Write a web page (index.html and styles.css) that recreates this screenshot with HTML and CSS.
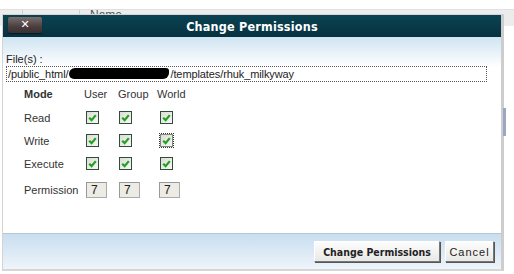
FILE: index.html
```html
<!DOCTYPE html>
<html lang="en">
<head>
    <meta charset="UTF-8">
    <title>Change Permissions</title>
    <link rel="stylesheet" href="styles.css">
</head>
<body>
    <div class="page">
        <div class="grid-head">
            <span class="col-check"></span>
            <span class="col-name">Name</span>
        </div>
    </div>

    <div class="dialog" role="dialog" aria-label="Change Permissions">
        <header class="dlg-header">
            <button class="dlg-close" aria-label="Close">&#x2715;</button>
            <h1 class="dlg-title">Change Permissions</h1>
        </header>
        <section class="dlg-body">
            <div class="files-label">File(s) :</div>
            <div class="files-path">/public_html/<span class="redact"></span>/templates/rhuk_milkyway</div>

            <table class="perm-table">
                <colgroup>
                    <col class="c-mode">
                    <col class="c-user">
                    <col class="c-group">
                    <col class="c-world">
                </colgroup>
                <thead>
                    <tr>
                        <th class="mode">Mode</th>
                        <th>User</th>
                        <th>Group</th>
                        <th>World</th>
                    </tr>
                </thead>
                <tbody>
                    <tr>
                        <td class="label">Read</td>
                        <td><span class="check"><svg viewBox="0 0 10 10"><path d="M2 5.2 4.2 7.4 8 2.8" /></svg></span></td>
                        <td><span class="check c2"><svg viewBox="0 0 10 10"><path d="M2 5.2 4.2 7.4 8 2.8" /></svg></span></td>
                        <td><span class="check c3"><svg viewBox="0 0 10 10"><path d="M2 5.2 4.2 7.4 8 2.8" /></svg></span></td>
                    </tr>
                    <tr>
                        <td class="label">Write</td>
                        <td><span class="check"><svg viewBox="0 0 10 10"><path d="M2 5.2 4.2 7.4 8 2.8" /></svg></span></td>
                        <td><span class="check c2"><svg viewBox="0 0 10 10"><path d="M2 5.2 4.2 7.4 8 2.8" /></svg></span></td>
                        <td><span class="check c3 focused"><svg viewBox="0 0 10 10"><path d="M2 5.2 4.2 7.4 8 2.8" /></svg></span></td>
                    </tr>
                    <tr>
                        <td class="label">Execute</td>
                        <td><span class="check"><svg viewBox="0 0 10 10"><path d="M2 5.2 4.2 7.4 8 2.8" /></svg></span></td>
                        <td><span class="check c2"><svg viewBox="0 0 10 10"><path d="M2 5.2 4.2 7.4 8 2.8" /></svg></span></td>
                        <td><span class="check c3"><svg viewBox="0 0 10 10"><path d="M2 5.2 4.2 7.4 8 2.8" /></svg></span></td>
                    </tr>
                    <tr class="perm-row">
                        <td class="label">Permission</td>
                        <td><span class="perm-box">7</span></td>
                        <td><span class="perm-box c2">7</span></td>
                        <td><span class="perm-box">7</span></td>
                    </tr>
                </tbody>
            </table>
        </section>
        <footer class="dlg-footer">
            <button class="btn btn-primary">Change Permissions</button>
            <button class="btn btn-cancel">Cancel</button>
        </footer>
    </div>
    <div class="scroll-thumb"></div>
</body>
</html>
```

FILE: styles.css
```css
body {
    margin: 0;
    background: #fff;
    font-family: "Liberation Sans", Arial, sans-serif;
    font-size: 11px;
    color: #222;
    width: 514px;
    height: 274px;
    overflow: hidden;
    position: relative;
}
.page {
    padding-top: 9px;
}
.grid-head {
    display: flex;
    height: 16px;
    background: #ececec;
    border-top: 1px solid #e0e0e0;
    color: #555;
    font-size: 12px;
}
.col-check {
    width: 22px;
    border-right: 1px solid #cfcfcf;
}
.col-name {
    margin-left: 56px;
    padding-left: 10px;
    border-left: 1px solid #cfcfcf;
    line-height: 10px;
}
.dialog {
    position: absolute;
    left: 2px;
    top: 14px;
    width: 498px;
    height: 254px;
    background: #fff;
    border: 1px solid #d4d4d4;
    border-right: 3px solid #cdcdcd;
    border-bottom: 2px solid #d6d6d6;
    display: flex;
    flex-direction: column;
}
.dlg-header {
    height: 22px;
    background: linear-gradient(#0a4352, #07313f);
    display: flex;
    align-items: center;
    position: relative;
}
.dlg-close {
    position: absolute;
    left: 5px;
    top: 2px;
    width: 34px;
    height: 16px;
    padding: 0;
    border: none;
    border-radius: 2px;
    background: linear-gradient(#7a6f6f, #4a3e3e 60%, #3a3030);
    box-shadow: 0 1px 1px rgba(0,0,0,0.5);
    color: #fff;
    font-size: 11px;
    font-weight: bold;
    font-family: "DejaVu Sans", sans-serif;
    line-height: 16px;
}
.dlg-title {
    flex-grow: 1;
    margin: 0;
    text-align: center;
    color: #fff;
    font-family: "DejaVu Sans Condensed", "DejaVu Sans", sans-serif;
    font-size: 12.5px;
    font-weight: bold;
    letter-spacing: 0.2px;
}
.dlg-body {
    flex-grow: 1;
    padding: 16px 12px 0 3px;
    background: linear-gradient(#cfe4f2, #ffffff 30px);
}
.files-label {
    color: #222;
    line-height: 12px;
}
.files-path {
    margin-top: 1px;
    width: 478px;
    height: 14px;
    border: 1px dotted #555;
    line-height: 14px;
    padding-left: 1px;
    letter-spacing: -0.1px;
}
.redact {
    display: inline-block;
    width: 100px;
    height: 11px;
    margin: 0 1px;
    background: #000;
    border-radius: 6px 3px 6px 5px;
    vertical-align: -1px;
}
.perm-table {
    margin-top: 0;
    margin-left: 18px;
    border-collapse: collapse;
    table-layout: fixed;
    color: #333;
}
.c-mode { width: 60px; }
.c-user { width: 34px; }
.c-group { width: 39px; }
.c-world { width: 40px; }
.perm-table th {
    font-weight: normal;
    text-align: left;
    height: 24px;
    padding: 0;
    color: #333;
}
.perm-table th.mode {
    font-weight: bold;
}
.perm-table td {
    height: 23px;
    padding: 0;
}
.check {
    display: inline-block;
    width: 11px;
    height: 11px;
    margin-left: 2px;
    border: 1px solid #2f4d3f;
    background: linear-gradient(135deg, #dcdcd4, #f8f8f4);
    vertical-align: middle;
}
.check.c2,
.perm-box.c2 {
    margin-left: 1px;
}
.check.c3 {
    margin-left: 3px;
}
.check svg {
    display: block;
    width: 11px;
    height: 11px;
    fill: none;
    stroke: #21a121;
    stroke-width: 2;
}
.check.focused {
    outline: 1px dotted #333;
    border-color: #7a8c80;
}
.perm-row td {
    height: 29px;
}
.perm-box {
    display: inline-block;
    box-sizing: border-box;
    width: 21px;
    height: 16px;
    margin-left: 2px;
    padding-left: 4px;
    line-height: 14px;
    font-size: 12px;
    background: #ecebe4;
    border: 1px solid #aaa;
    border-top-color: #999;
    border-left-color: #999;
    color: #222;
    vertical-align: middle;
}
.dlg-footer {
    height: 35px;
    border-top: 1px solid #b9c6d0;
    background: linear-gradient(#c8def0, #eef4fa);
    display: flex;
    align-items: center;
    justify-content: flex-end;
    gap: 5px;
    padding-right: 7px;
}
.btn {
    height: 21px;
    padding: 0 6px;
    white-space: nowrap;
    font-family: "DejaVu Sans", sans-serif;
    font-size: 10.5px;
    background: linear-gradient(#fdfdfd, #e8e8e6);
    color: #222;
    border: 1px solid #fff;
    border-right-color: #777;
    border-bottom-color: #777;
    box-shadow: 1px 1px 0 #555;
}
.btn-primary {
    font-family: "DejaVu Sans Condensed", "DejaVu Sans", sans-serif;
    font-weight: bold;
    width: 126px;
}
.btn-cancel {
    width: 49px;
    padding: 0;
    font-family: "Liberation Sans", Arial, sans-serif;
    font-size: 11px;
    letter-spacing: 1px;
}
.scroll-thumb {
    position: absolute;
    left: 503px;
    top: 108px;
    width: 3px;
    height: 28px;
    background: #9aa6c4;
}
```
